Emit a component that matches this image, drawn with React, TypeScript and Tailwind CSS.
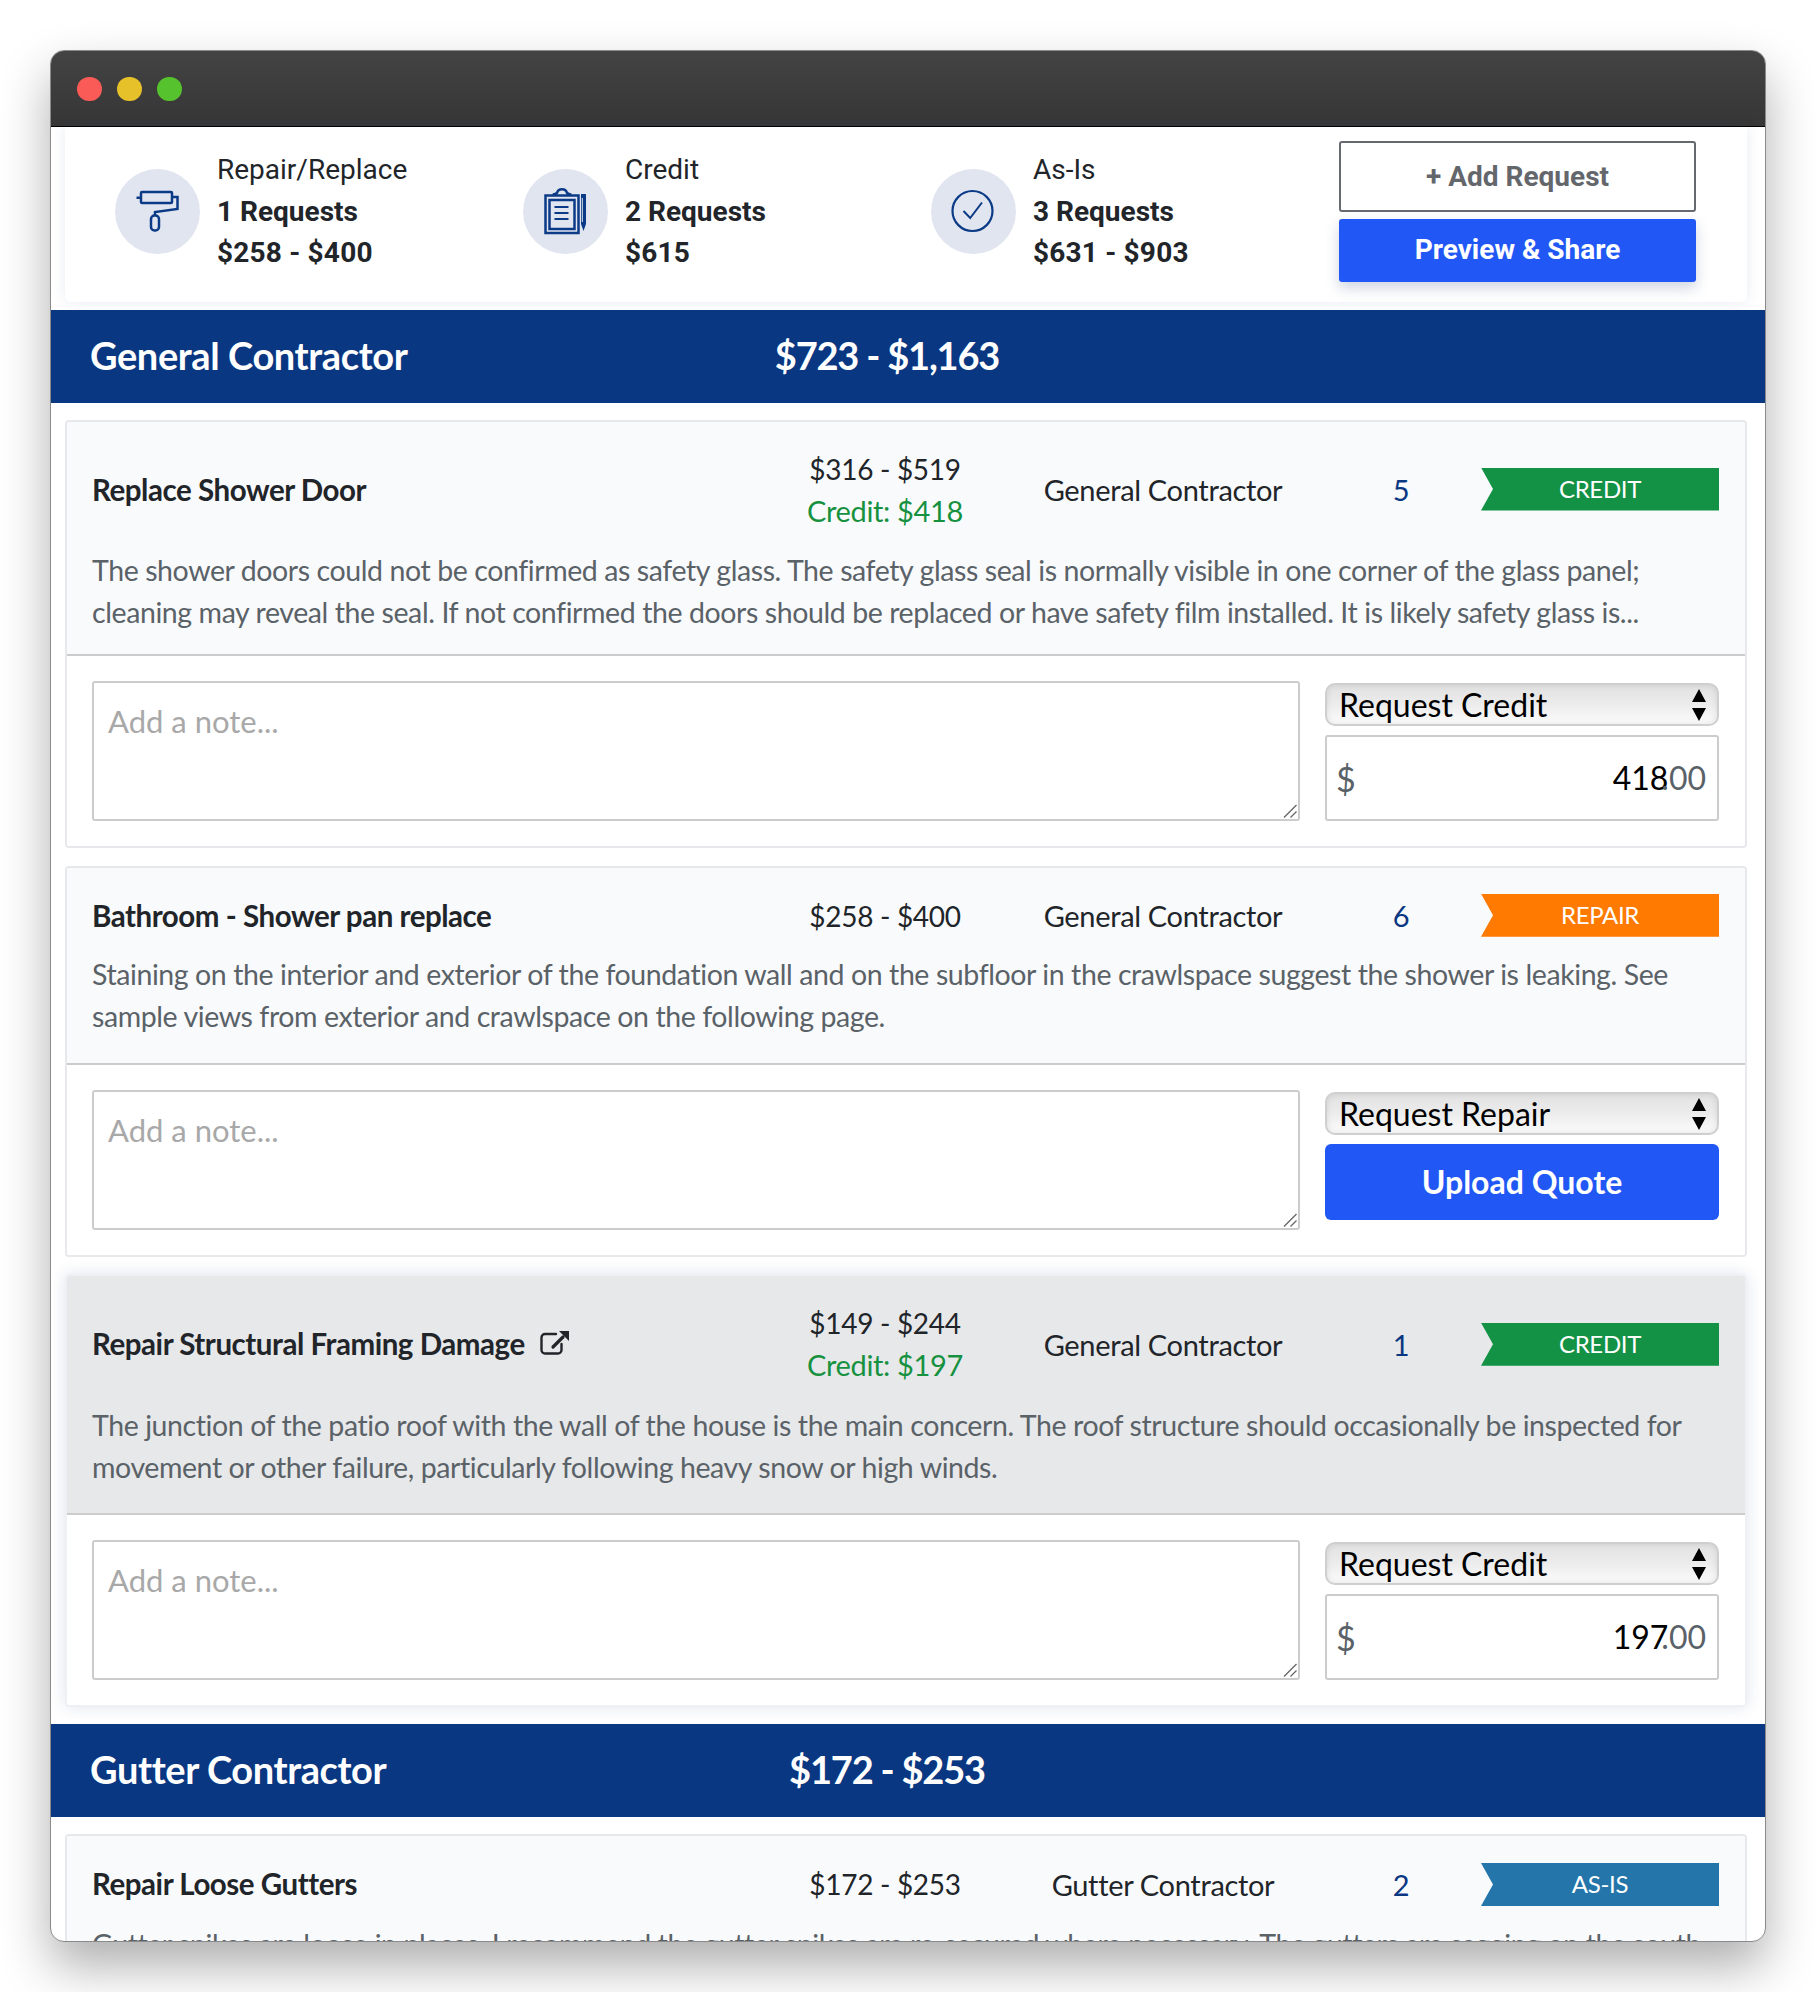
import React from "react";

const lato = "font-['Lato','Liberation_Sans',sans-serif]";
const roboto = "font-['Roboto','Liberation_Sans',sans-serif]";

function Roller() {
  return (
    <svg viewBox="6 9 85 85" className="w-[85px] h-[85px]" fill="none" stroke="#0b3a86" strokeWidth="2.5">
      <rect x="32" y="32" width="31" height="11" rx="1" />
      <path d="M27.5 37.7H32" />
      <path d="M63 37h5.500v12L46 52v3.500" />
      <rect x="42" y="55.500" width="8" height="15" rx="3.500" />
    </svg>
  );
}

function Clip() {
  return (
    <svg viewBox="6 9 85 85" className="w-[85px] h-[85px]" fill="none" stroke="#0b3a86" strokeWidth="2.5">
      <rect x="28.500" y="35.500" width="33" height="37.500" />
      <rect x="32.500" y="40" width="25" height="29" />
      <path d="M36 35c1-1 3-1 4-2 1-5 9-5 10 0 1 1 3 1 4 2" />
      <path d="M37.500 47h14M37.500 53h14M37.500 59h14" strokeWidth="2" />
      <path d="M64 34h5v30l-2.500 7-2.500-7z" fill="#0b3a86" stroke="none" />
      <path d="M65.300 38v24" stroke="#e1e5f0" strokeWidth="1" />
    </svg>
  );
}

function Check() {
  return (
    <svg viewBox="6 9 85 85" className="w-[85px] h-[85px]" fill="none" stroke="#0b3a86" strokeWidth="2.2">
      <circle cx="47.500" cy="51" r="20" />
      <path d="M38.500 51l6.700 7L57 42.500" strokeWidth="2" />
    </svg>
  );
}

function External() {
  return (
    <svg viewBox="10 10 30 26" className="w-[30px] h-[26px] ml-[14px] -mt-[3px]" fill="none" stroke="#212529">
      <path d="M27 14h-11a3.500 3.500 0 0 0-3.500 3.500v12.500a3.500 3.500 0 0 0 3.500 3.500h13a3.500 3.500 0 0 0 3.500-3.500V24" strokeWidth="2.400" strokeLinecap="round" />
      <path d="M24 27l10-10" strokeWidth="3.200" strokeLinecap="round" />
      <path d="M30 11h10v10z" fill="#212529" stroke="none" />
    </svg>
  );
}

function SummaryItem({ icon, a, b, c }: { icon: React.ReactNode; a: string; b: string; c: string }) {
  return (
    <div className="flex items-center gap-[17px] w-[408px]">
      <div className="w-[85px] h-[85px] rounded-full bg-[#e1e5f0] shrink-0">{icon}</div>
      <div className={`${roboto} text-[28px] leading-[41.500px] text-[#212529]`}>
        <div>{a}</div>
        <div className="font-bold">{b}</div>
        <div className="font-bold tracking-[0.2px]">{c}</div>
      </div>
    </div>
  );
}

function SectionBar({ name, price, cls }: { name: string; price: string; cls?: string }) {
  return (
    <div className={`h-[93px] pb-[3px] bg-[#0a3782] flex items-center text-white ${lato} font-bold text-[38px] ${cls ?? ""}`}>
      <div className="w-[640px] pl-[39px] shrink-0 tracking-[-0.4px]">{name}</div>
      <div className="w-[392px] text-center tracking-[-1.200px]">{price}</div>
    </div>
  );
}

function Badge({ label, color, up }: { label: string; color: string; up?: boolean }) {
  return (
    <div className={`h-[43px] w-[238px] flex items-center justify-center text-white text-[24px] [clip-path:polygon(0_0,100%_0,100%_100%,0_100%,12px_50%)] ${up ? "-mt-[2px]" : ""} ${color}`}>
      {label}
    </div>
  );
}

function Head({ title, ext, price, credit, contractor, num, badge, badgeColor, badgeUp, desc, gray, noDivider, pb, descGap }: {
  title: string; ext?: boolean; price: string; credit?: string; contractor: string; num: string;
  badge: string; badgeColor: string; badgeUp?: boolean; desc: string[]; gray?: boolean; noDivider?: boolean; pb: string; descGap: string;
}) {
  return (
    <div className={`pl-[25px] pr-[26px] pt-[26px] ${pb} ${gray ? "bg-[#e7e8ea]" : "bg-[#f9fafc]"} ${noDivider ? "" : "border-b-2 border-[#cccccc]"}`}>
      <div className="grid grid-cols-[663px_260px_296px_170px_238px] items-center text-[#212529] text-[29px] tracking-[-0.33px]">
        <div className="flex items-center font-bold text-[29.500px] tracking-[-0.46px]">
          {title}
          {ext && <External />}
        </div>
        <div className="text-center leading-[42px]">
          <div className="text-[28px] tracking-[-0.3px]">{price}</div>
          {credit && <div className="text-[#16913f]">{credit}</div>}
        </div>
        <div className="text-center">{contractor}</div>
        <div className="text-center pl-[10px] text-[#0a3782]">{num}</div>
        <Badge label={badge} color={badgeColor} up={badgeUp} />
      </div>
      <div className={`${descGap} text-[28.500px] tracking-[-0.41px] leading-[42px] text-[#5a6268] whitespace-nowrap`}>
        {desc.map((d) => (
          <div key={d}>{d}</div>
        ))}
      </div>
    </div>
  );
}

function NoteBox() {
  return (
    <div className="relative w-[1208px] h-[140px] shrink-0">
      <textarea
        placeholder="Add a note..."
        className="w-full h-full resize-none border-2 border-[#cccccc] rounded-[3px] bg-white px-[14px] pt-[20px] text-[31px] leading-[36px] placeholder:text-[#a8a8a8] outline-none"
      />
      <svg viewBox="0 0 14 14" className="absolute right-[3px] bottom-[3px] w-[14px] h-[14px]" stroke="#666" strokeWidth="1.300" fill="none">
        <path d="M1 13.500L13.500 1M7.500 13.500L13.500 7.500" />
      </svg>
    </div>
  );
}

function SelectBox({ label }: { label: string }) {
  return (
    <div className="h-[43px] rounded-[10px] border-2 border-[#cfcfcf] bg-gradient-to-b from-[#e2e2e2] via-[#ececec] to-[#fcfcfc] shadow-[inset_0_0_6px_rgba(0,0,0,0.10)] flex items-center justify-between pl-[12px] pr-[10px] text-[32px] text-black">
      <span>{label}</span>
      <svg viewBox="0 0 16 34" className="w-[16px] h-[34px]" fill="#000">
        <path d="M8 1l7 13H1zM1 20h14l-7 13z" />
      </svg>
    </div>
  );
}

function Amount({ value }: { value: string }) {
  return (
    <div className="mt-[9px] h-[86px] border-2 border-[#cccccc] rounded-[3px] bg-white flex items-center justify-between pl-[9px] pr-[11px] text-[32px] text-[#5a6268]">
      <span className="text-[34px]">$</span>
      <span>
        <span className="text-black">{value}</span>
        <span className="-ml-[7px]">.</span>
        <span>00</span>
      </span>
    </div>
  );
}

function Foot({ children }: { children: React.ReactNode }) {
  return (
    <div className="bg-white flex gap-[25px] pl-[25px] pr-[26px] pt-[25px] pb-[25px]">
      <NoteBox />
      <div className="w-[394px] pt-[2px]">{children}</div>
    </div>
  );
}

export default function App() {
  return (
    <div className={`w-[1816px] h-[1992px] bg-white pt-[50px] pl-[50px] ${lato}`}>
      <div className="w-[1716px] h-[1892px] rounded-[14px] overflow-hidden border border-[#8a8a8a] bg-white shadow-[0_24px_50px_rgba(0,0,0,0.32)] flex flex-col">
        <div className="h-[76px] shrink-0 bg-gradient-to-b from-[#434343] to-[#363636] border-b border-black flex items-center gap-[15px] pl-[26px]">
          <span className="w-[25px] h-[24px] rounded-full bg-[#fb5b56]" />
          <span className="w-[25px] h-[24px] rounded-full bg-[#e7c12a]" />
          <span className="w-[25px] h-[24px] rounded-full bg-[#55c22e]" />
        </div>
        <div className="ml-[14px] mr-[18px] h-[175px] shrink-0 bg-white rounded-b-[6px] shadow-[0_0_14px_rgba(30,60,120,0.10)] flex items-start pl-[50px]">
          <div className="flex pt-[22px]">
            <SummaryItem icon={<Roller />} a="Repair/Replace" b="1 Requests" c="$258 - $400" />
            <SummaryItem icon={<Clip />} a="Credit" b="2 Requests" c="$615" />
            <SummaryItem icon={<Check />} a="As-Is" b="3 Requests" c="$631 - $903" />
          </div>
          <div className={`w-[357px] shrink-0 pt-[14px] ${roboto} font-bold text-[28px]`}>
            <div className="h-[71px] border-2 border-[#666a70] rounded-[3px] bg-white text-[#63676c] flex items-center justify-center">+ Add Request</div>
            <div className="mt-[7px] h-[63px] pb-[2px] bg-[#2158f5] rounded-[3px] text-white flex items-center justify-center shadow-[0_6px_14px_rgba(30,60,120,0.22)]">Preview &amp; Share</div>
          </div>
        </div>
        <SectionBar name="General Contractor" price="$723 - $1,163" cls="mt-[8px] shrink-0" />

        <div className="ml-[14px] mr-[18px] mt-[17px] border-2 border-[#e6e8eb] rounded-[4px] overflow-hidden shrink-0">
          <Head
            pb="pb-[21px]"
            descGap="mt-[17px]"
            badgeUp
            title="Replace Shower Door"
            price="$316 - $519"
            credit="Credit: $418"
            contractor="General Contractor"
            num="5"
            badge="CREDIT"
            badgeColor="bg-[#139145]"
            desc={[
              "The shower doors could not be confirmed as safety glass. The safety glass seal is normally visible in one corner of the glass panel;",
              "cleaning may reveal the seal. If not confirmed the doors should be replaced or have safety film installed. It is likely safety glass is...",
            ]}
          />
          <Foot>
            <SelectBox label="Request Credit" />
            <Amount value="418" />
          </Foot>
        </div>

        <div className="ml-[14px] mr-[18px] mt-[18px] border-2 border-[#e6e8eb] rounded-[4px] overflow-hidden shrink-0">
          <Head
            pb="pb-[26px]"
            descGap="mt-[15px]"
            badgeUp
            title="Bathroom - Shower pan replace"
            price="$258 - $400"
            contractor="General Contractor"
            num="6"
            badge="REPAIR"
            badgeColor="bg-[#ff7a00]"
            desc={[
              "Staining on the interior and exterior of the foundation wall and on the subfloor in the crawlspace suggest the shower is leaking. See",
              "sample views from exterior and crawlspace on the following page.",
            ]}
          />
          <Foot>
            <SelectBox label="Request Repair" />
            <button className="mt-[9px] w-full h-[76px] bg-[#2158f5] rounded-[6px] text-white font-bold text-[32px]">Upload Quote</button>
          </Foot>
        </div>

        <div className="ml-[14px] mr-[18px] mt-[17px] border-2 border-[#eef0f3] rounded-[4px] overflow-hidden shrink-0 shadow-[0_0_16px_rgba(30,60,120,0.14)]">
          <Head
            gray
            pb="pb-[25px]"
            descGap="mt-[18px]"
            title="Repair Structural Framing Damage"
            ext
            price="$149 - $244"
            credit="Credit: $197"
            contractor="General Contractor"
            num="1"
            badge="CREDIT"
            badgeColor="bg-[#139145]"
            desc={[
              "The junction of the patio roof with the wall of the house is the main concern. The roof structure should occasionally be inspected for",
              "movement or other failure, particularly following heavy snow or high winds.",
            ]}
          />
          <Foot>
            <SelectBox label="Request Credit" />
            <Amount value="197" />
          </Foot>
        </div>

        <SectionBar name="Gutter Contractor" price="$172 - $253" cls="mt-[17px] shrink-0" />

        <div className="ml-[14px] mr-[18px] mt-[17px] border-2 border-[#e6e8eb] rounded-[4px] overflow-hidden shrink-0">
          <Head
            pb="pb-[21px]"
            descGap="mt-[16px]"
            title="Repair Loose Gutters"
            price="$172 - $253"
            contractor="Gutter Contractor"
            num="2"
            badge="AS-IS"
            badgeColor="bg-[#2475a9]"
            noDivider
            desc={[
              "Gutter spikes are loose in places. I recommend the gutter spikes are re-secured where necessary. The gutters are sagging on the south",
              "side of the house.",
            ]}
          />
        </div>
      </div>
    </div>
  );
}
